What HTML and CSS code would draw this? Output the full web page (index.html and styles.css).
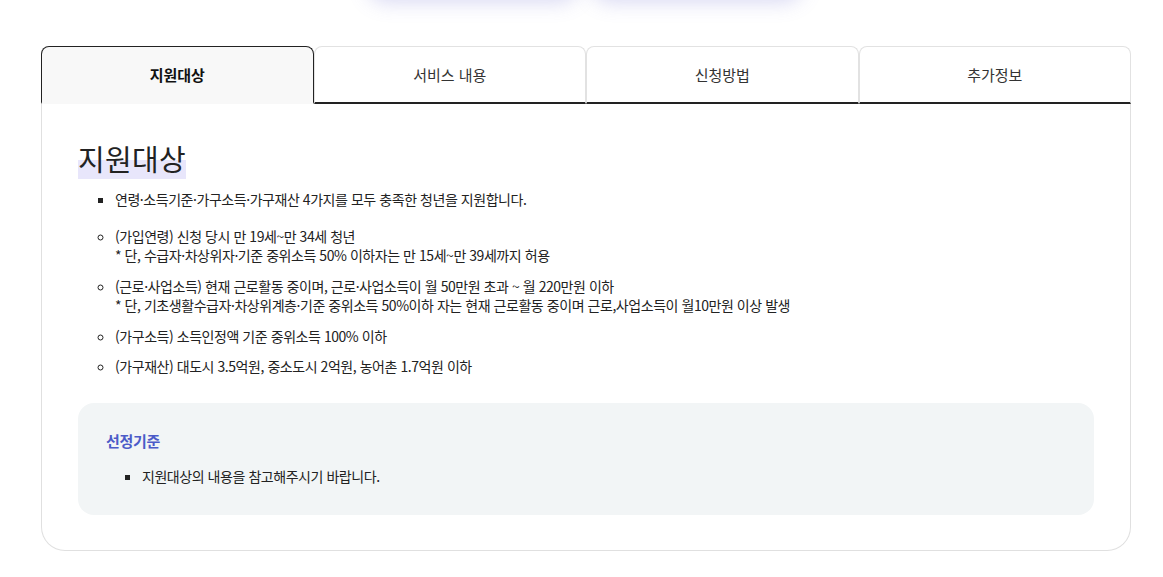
FILE: index.html
```html
<!DOCTYPE html>
<html lang="ko">
<head>
	<meta charset="UTF-8">
	<meta name="viewport" content="width=device-width, initial-scale=1.0">
	<title>지원대상</title>
	<link rel="stylesheet" href="styles.css">
</head>
<body>
	<div class="top-buttons">
		<div class="top-btn"></div>
		<div class="top-btn"></div>
	</div>

	<div class="container">
		<div class="tabs">
			<div class="tab active">지원대상</div>
			<div class="tab">서비스 내용</div>
			<div class="tab">신청방법</div>
			<div class="tab">추가정보</div>
		</div>

		<div class="panel">
			<h2 class="title"><span>지원대상</span></h2>

			<ul class="list square">
				<li>연령·소득기준·가구소득·가구재산 4가지를 모두 충족한 청년을 지원합니다.</li>
			</ul>

			<ul class="list circle">
				<li>(가입연령) 신청 당시 만 19세~만 34세 청년<br>* 단, 수급자·차상위자·기준 중위소득 50% 이하자는 만 15세~만 39세까지 허용</li>
				<li>(근로·사업소득) 현재 근로활동 중이며, 근로·사업소득이 월 50만원 초과 ~ 월 220만원 이하<br>* 단, 기초생활수급자·차상위계층·기준 중위소득 50%이하 자는 현재 근로활동 중이며 근로,사업소득이 월10만원 이상 발생</li>
				<li>(가구소득) 소득인정액 기준 중위소득 100% 이하</li>
				<li>(가구재산) 대도시 3.5억원, 중소도시 2억원, 농어촌 1.7억원 이하</li>
			</ul>

			<div class="criteria">
				<h3>선정기준</h3>
				<ul class="list square">
					<li>지원대상의 내용을 참고해주시기 바랍니다.</li>
				</ul>
			</div>
		</div>
	</div>
</body>
</html>
```

FILE: styles.css
```css
body {
	margin: 0;
	font-family: "Noto Sans CJK KR", "Noto Sans", sans-serif;
	background-color: #fff;
	color: #222;
}

.top-buttons {
	display: flex;
	justify-content: center;
	gap: 12px;
	height: 40px;
	margin-top: -50px;
	padding-left: 7px;
}

.top-btn {
	width: 212px;
	border-radius: 20px;
	background-color: #fff;
	box-shadow: 0 12px 20px rgba(110, 110, 210, 0.28);
}

.container {
	width: 1090px;
	margin: 56px 0 0 41px;
}

.tabs {
	display: flex;
}

.tab {
	flex: 1;
	height: 55px;
	display: flex;
	align-items: center;
	justify-content: center;
	font-size: 15px;
	color: #333;
	background-color: #fff;
	border: 1px solid #e2e2e2;
	border-bottom: 2px solid #222;
	border-radius: 8px 8px 0 0;
}

.tab.active {
	font-weight: bold;
	color: #111;
	background-color: #f8f8f8;
	border: 1px solid #222;
	border-bottom: 2px solid #f8f8f8;
}

.panel {
	border: 1px solid #e0e0e0;
	border-top: none;
	border-radius: 0 0 24px 24px;
	padding: 33px 36px 35px 36px;
}

.title {
	margin: 0 0 11px 0;
	font-size: 29px;
	font-weight: normal;
	line-height: 42px;
	letter-spacing: 0.3px;
}

.title span {
	background: linear-gradient(transparent 55%, #e8e6fb 55%);
}

.list {
	margin: 0;
	padding: 0 0 0 37px;
	font-size: 14px;
	line-height: 19.5px;
	letter-spacing: -0.45px;
}

.list li {
	margin-bottom: 11px;
	padding-left: 0;
}

.list.square {
	list-style: square;
	margin-bottom: 17px;
}

.list.circle {
	list-style: circle;
	margin-bottom: 26px;
}

.list li::marker {
	font-size: 14px;
}

.criteria {
	background-color: #f2f5f6;
	border-radius: 16px;
	padding: 27px 28px 18px 28px;
}

.criteria h3 {
	margin: 0 0 15px 0;
	font-size: 15px;
	color: #4c5bc8;
	line-height: 22px;
	letter-spacing: -0.3px;
}

.criteria .list {
	padding-left: 36px;
}

.criteria .list.square {
	margin-bottom: 0;
}
```
